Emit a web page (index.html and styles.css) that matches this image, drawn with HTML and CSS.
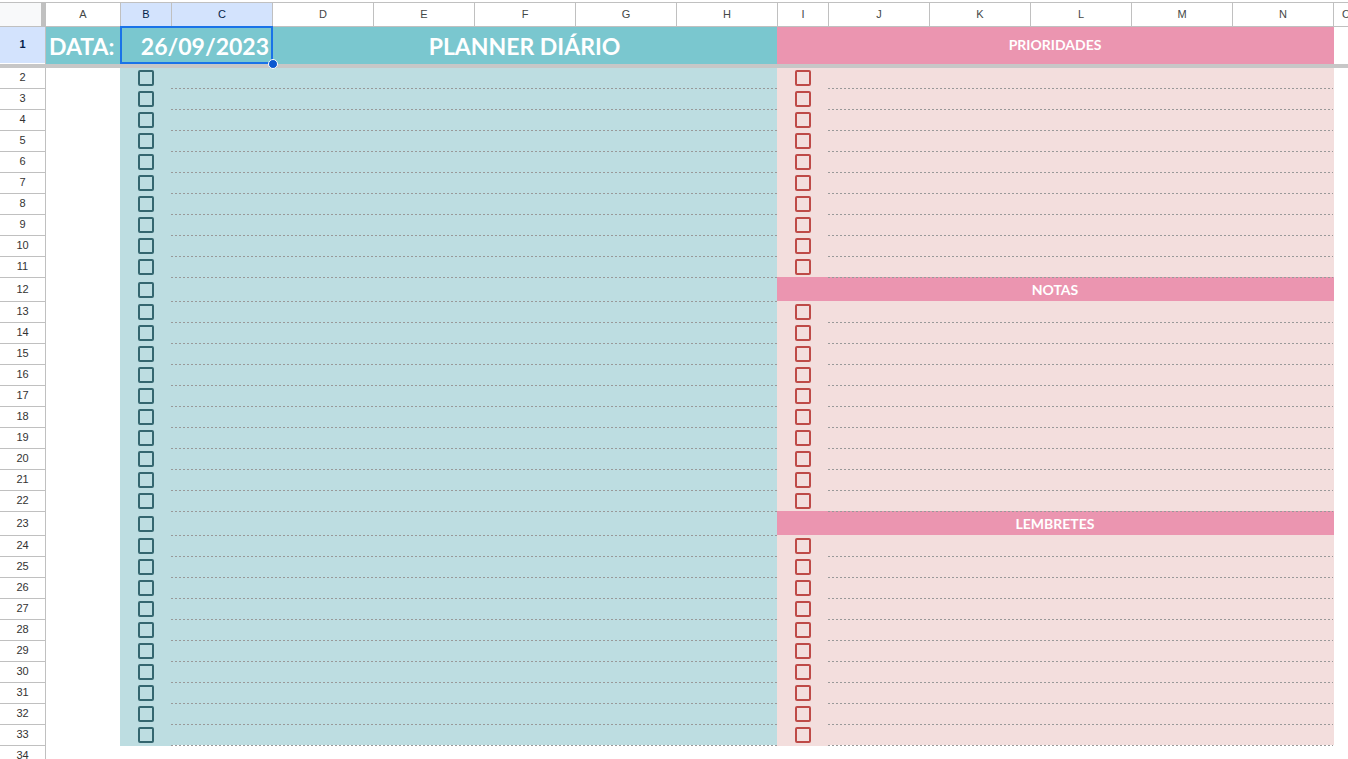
FILE: index.html
```html
<!DOCTYPE html>
<html lang="pt-BR">
<head>
<meta charset="utf-8">
<title>Planner diário</title>
<link rel="stylesheet" href="styles.css">
</head>
<body>
<main class="viewport">
  <table class="sheet">
    <colgroup>
      <col class="col-index"><col class="col-a"><col class="col-check">
      <col class="col-std"><col class="col-std"><col class="col-std"><col class="col-std"><col class="col-std"><col class="col-std">
      <col class="col-check">
      <col class="col-std"><col class="col-std"><col class="col-std"><col class="col-std"><col class="col-std">
      <col class="col-rest">
    </colgroup>
    <thead>
      <tr class="letters">
        <td class="corner"></td>
        <th scope="col">A</th><th scope="col" class="active">B</th><th scope="col" class="active">C</th>
        <th scope="col">D</th><th scope="col">E</th><th scope="col">F</th><th scope="col">G</th><th scope="col">H</th>
        <th scope="col">I</th><th scope="col">J</th><th scope="col">K</th><th scope="col">L</th><th scope="col">M</th><th scope="col">N</th>
        <th scope="col" class="last">O</th>
      </tr>
      <tr class="title-row">
        <th scope="row" class="index active">1</th>
        <td class="label">DATA:</td>
        <td class="date" colspan="2"><div class="selection">26/09/2023<span class="handle"></span></div></td>
        <td class="title" colspan="5">PLANNER DIÁRIO</td>
        <td class="section" colspan="6">PRIORIDADES</td>
        <td></td>
      </tr>
      <tr class="freeze"><td colspan="16"></td></tr>
    </thead>
    <tbody id="rows"></tbody>
  </table>
</main>
<script src="script.js"></script>
</body>
</html>
```
FILE: styles.css
```css
* { box-sizing: border-box; }

body {
  margin: 0;
  background: #fff;
  font-family: "Liberation Sans", Arial, sans-serif;
  font-size: 11px;
  color: #444746;
}

.viewport {
  height: 100vh;
  padding-top: 2px;
  overflow: hidden;
}

.sheet {
  table-layout: fixed;
  width: 100%;
  min-width: 1348px;
  border-collapse: separate;
  border-spacing: 0;
}

.col-index { width: 45px; }
.col-a { width: 75px; }
.col-check { width: 51px; }
.col-std { width: 101px; }

td, th { padding: 0; font-weight: 400; }

.letters { height: 25px; }
.letters th, .corner {
  padding-bottom: 2px;
  border: 1px solid #c0c0c0;
  border-width: 1px 0 1px 1px;
  text-align: center;
}
.letters .last { padding-left: 8px; text-align: left; }
.letters .active, .index.active { background: #d3e3fd; color: #041e49; }
.corner {
  background: #f8f9fa;
  border-left: 0;
  border-right: 4px solid #c0c0c0;
}

.index {
  padding-bottom: 2px;
  border-top: 1px solid #c0c0c0;
  background: #fff;
  text-align: center;
  color: #333;
}
.index.active { border-top: 0; border-bottom: 1px solid #fff; font-weight: 700; }

.title-row { height: 37px; }
.label, .date, .title, .section {
  font-family: Lato, Calibri, sans-serif;
  font-weight: 700;
  color: #fff;
  text-align: center;
}
.label, .date, .title {
  background: #7ac7cf;
  font-size: 23px;
  line-height: 34px;
  white-space: nowrap;
}
.label, .blank { border-left: 1px solid #c0c0c0; }
.label { padding-left: 3px; text-align: left; }
.section { background: #eb95b0; font-size: 14px; line-height: 16px; }
.title-row .section { padding-bottom: 2px; }
.tall .section { padding-top: 2px; }

.selection {
  position: relative;
  height: 38px;
  margin: -1px -1px 0 0;
  padding-right: 2px;
  border: 2px solid #1a73e8;
  line-height: 36px;
  text-align: right;
}
.handle {
  position: absolute;
  right: -7px;
  bottom: -7px;
  width: 10px;
  height: 10px;
  border: 1px solid #fff;
  border-radius: 50%;
  background: #0b57d0;
}

.freeze td { height: 4px; background: #c7c7c7; }

.row { height: 21px; }
.row.first { height: 20px; }
.row.tall { height: 24px; }
.row.first .index { border-top: 0; }

.check { padding: 1px 0 0 18px; }
.first .check { padding: 0 0 1px 18px; }
.task { background-color: #bddde1; }
.note { background-color: #f3dedd; }

/* Pink panels cover the grid line that closes column N. */
.note:last-of-type, .note[colspan] { box-shadow: 1px 0 #f3dedd; }
.section { box-shadow: 1px 0 #eb95b0; }

.ruled {
  background-image: repeating-linear-gradient(90deg, #999 0 2px, transparent 2px 4px);
  background-size: 100% 1px;
  background-repeat: no-repeat;
}
.ruled.section { background-position: 51px 0; }
.end .check.task { border-top: 1px solid #bddde1; background: none; }
.end .check.note { border-top: 1px solid #f3dedd; background: none; }
.end .ruled { background-color: transparent; box-shadow: none; }

.box {
  appearance: none;
  display: block;
  width: 16px;
  height: 16px;
  margin: 0;
  border: 2px solid;
  border-radius: 2px;
}
.task .box { border-color: #34666f; }
.note .box { border-color: #be4a47; }
.box:checked { background: currentColor; }
```
FILE: script.js
```js
const headings = { 12: "NOTAS", 23: "LEMBRETES" };
const lastRow = 34;

function checkCell(kind, row) {
  const box = row === lastRow ? "" :
    `<input class="box" type="checkbox" aria-label="${kind === "task" ? "Tarefa" : "Item"} ${row}">`;
  return `<td class="check ${kind}">${box}</td>`;
}

let html = "";
for (let row = 2; row <= lastRow; row++) {
  const heading = headings[row];
  const classes = ["row"];
  if (row === 2) classes.push("first");
  if (heading) classes.push("tall");
  if (row === lastRow) classes.push("end");

  const taskRule = row === 2 ? "" : " ruled";
  const noteRule = row === 2 || headings[row - 1] ? "" : " ruled";
  const right = heading
    ? `<td class="section ruled" colspan="6">${heading}</td>`
    : `${checkCell("note", row)}<td class="note${noteRule}" colspan="5"></td>`;

  html += `<tr class="${classes.join(" ")}">
    <th scope="row" class="index">${row}</th>
    <td class="blank"></td>
    ${checkCell("task", row)}
    <td class="task${taskRule}" colspan="6"></td>
    ${right}
    <td></td>
  </tr>`;
}
document.getElementById("rows").innerHTML = html;
```
